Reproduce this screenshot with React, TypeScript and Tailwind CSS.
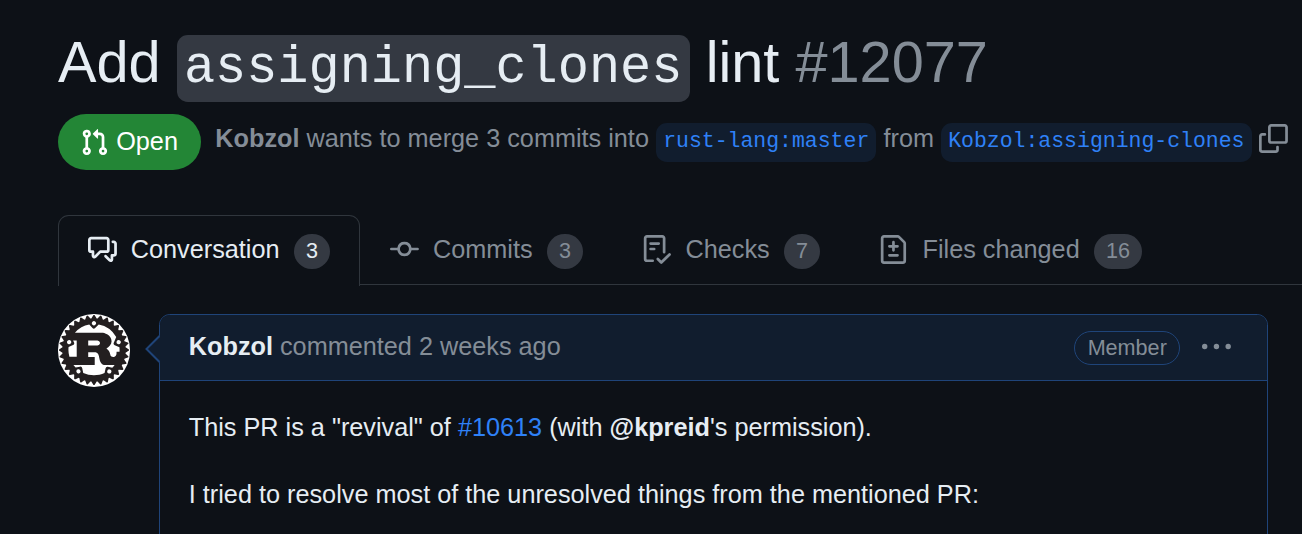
import type { ReactNode } from "react";
import { SiRust } from "react-icons/si";

const paths = {
  pullRequest:
    "M1.5 3.25a2.25 2.25 0 1 1 3 2.122v5.256a2.251 2.251 0 1 1-1.5 0V5.372A2.25 2.25 0 0 1 1.5 3.25Zm5.677-.177L9.573.677A.25.25 0 0 1 10 .854V2.5h1A2.5 2.5 0 0 1 13.5 5v5.628a2.251 2.251 0 1 1-1.5 0V5a1 1 0 0 0-1-1h-1v1.646a.25.25 0 0 1-.427.177L7.177 3.427a.25.25 0 0 1 0-.354ZM3.75 2.5a.75.75 0 1 0 0 1.5.75.75 0 0 0 0-1.5Zm0 9.5a.75.75 0 1 0 0 1.5.75.75 0 0 0 0-1.5Zm8.25.75a.75.75 0 1 0 1.5 0 .75.75 0 0 0-1.5 0Z",
  discussion:
    "M1.75 1h8.5c.966 0 1.75.784 1.75 1.75v5.5A1.75 1.75 0 0 1 10.25 10H7.061l-2.574 2.573A1.458 1.458 0 0 1 2 11.543V10h-.25A1.75 1.75 0 0 1 0 8.25v-5.5C0 1.784.784 1 1.75 1ZM1.5 2.75v5.5c0 .138.112.25.25.25h1a.75.75 0 0 1 .75.75v2.19l2.72-2.72a.749.749 0 0 1 .53-.22h3.5a.25.25 0 0 0 .25-.25v-5.5a.25.25 0 0 0-.25-.25h-8.5a.25.25 0 0 0-.25.25Zm13 2a.25.25 0 0 0-.25-.25h-.5a.75.75 0 0 1 0-1.5h.5c.966 0 1.75.784 1.75 1.75v5.5A1.75 1.75 0 0 1 14.25 12H14v1.543a1.458 1.458 0 0 1-2.487 1.03L9.22 12.28a.749.749 0 0 1 .326-1.275.749.749 0 0 1 .734.215l2.22 2.22v-2.19a.75.75 0 0 1 .75-.75h1a.25.25 0 0 0 .25-.25Z",
  commit:
    "M11.93 8.5a4.002 4.002 0 0 1-7.86 0H.75a.75.75 0 0 1 0-1.5h3.32a4.002 4.002 0 0 1 7.86 0h3.32a.75.75 0 0 1 0 1.5Zm-1.43-.75a2.5 2.5 0 1 0-5 0 2.5 2.5 0 0 0 5 0Z",
  checklist:
    "M2.5 1.75v11.5c0 .138.112.25.25.25h3.17a.75.75 0 0 1 0 1.5H2.75A1.75 1.75 0 0 1 1 13.25V1.75C1 .784 1.784 0 2.75 0h8.5C12.216 0 13 .784 13 1.75v7.736a.75.75 0 0 1-1.5 0V1.75a.25.25 0 0 0-.25-.25h-8.5a.25.25 0 0 0-.25.25Zm13.274 9.537v-.001l-4.557 4.45a.75.75 0 0 1-1.055-.008l-1.943-1.95a.75.75 0 0 1 1.062-1.058l1.419 1.425 4.026-3.932a.75.75 0 1 1 1.048 1.074ZM4.75 4h4.5a.75.75 0 0 1 0 1.5h-4.5a.75.75 0 0 1 0-1.5ZM4 7.75A.75.75 0 0 1 4.75 7h2a.75.75 0 0 1 0 1.5h-2A.75.75 0 0 1 4 7.75Z",
  fileDiff:
    "M1 1.75C1 .784 1.784 0 2.75 0h7.586c.464 0 .909.184 1.237.513l2.914 2.914c.329.328.513.773.513 1.237v9.586A1.75 1.75 0 0 1 13.25 16H2.75A1.75 1.75 0 0 1 1 14.25Zm1.75-.25a.25.25 0 0 0-.25.25v12.5c0 .138.112.25.25.25h10.5a.25.25 0 0 0 .25-.25V4.664a.25.25 0 0 0-.073-.177l-2.914-2.914a.25.25 0 0 0-.177-.073ZM8 3.25a.75.75 0 0 1 .75.75v1.5h1.5a.75.75 0 0 1 0 1.5h-1.5v1.5a.75.75 0 0 1-1.5 0V7h-1.5a.75.75 0 0 1 0-1.5h1.5V4A.75.75 0 0 1 8 3.25Zm-3 8a.75.75 0 0 1 .75-.75h4.5a.75.75 0 0 1 0 1.5h-4.5a.75.75 0 0 1-.75-.75Z",
  copy:
    "M0 6.75C0 5.784.784 5 1.75 5h1.5a.75.75 0 0 1 0 1.5h-1.5a.25.25 0 0 0-.25.25v7.5c0 .138.112.25.25.25h7.5a.25.25 0 0 0 .25-.25v-1.5a.75.75 0 0 1 1.5 0v1.5A1.75 1.75 0 0 1 9.25 16h-7.5A1.75 1.75 0 0 1 0 14.25ZM5 1.75C5 .784 5.784 0 6.75 0h7.5C15.216 0 16 .784 16 1.75v7.5A1.75 1.75 0 0 1 14.25 11h-7.5A1.75 1.75 0 0 1 5 9.25Zm1.75-.25a.25.25 0 0 0-.25.25v7.5c0 .138.112.25.25.25h7.5a.25.25 0 0 0 .25-.25v-7.5a.25.25 0 0 0-.25-.25Z",
  kebab:
    "M8 9a1.5 1.5 0 1 0 0-3 1.5 1.5 0 0 0 0 3ZM1.5 9a1.5 1.5 0 1 0 0-3 1.5 1.5 0 0 0 0 3Zm13 0a1.5 1.5 0 1 0 0-3 1.5 1.5 0 0 0 0 3Z",
};

type IconName = keyof typeof paths;

function Icon({ name, className = "" }: { name: IconName; className?: string }) {
  return (
    <svg viewBox="0 0 16 16" fill="currentColor" className={`size-[28.9px] shrink-0 ${className}`}>
      <path d={paths[name]} />
    </svg>
  );
}

function Branch({ children }: { children: ReactNode }) {
  return (
    <span className="h-[39px] rounded-[10.8px] bg-[#111d2e] px-[7.2px] font-['Liberation_Mono',monospace] text-[21.47px] leading-[37px] text-[#2f81f7]">
      {children}
    </span>
  );
}

function Tab({ icon, label, count, active = false }: { icon: IconName; label: string; count: number; active?: boolean }) {
  return (
    <a
      className={`flex h-[71px] shrink-0 items-start pt-[19px] pl-[28.7px] ${
        active
          ? "rounded-t-[10.8px] border border-b-0 border-[#30363d] bg-[#0d1117] pr-[29.3px] text-[#e6edf3]"
          : "border border-b-0 border-transparent pr-[28.7px] text-[#848d97]"
      }`}
    >
      <Icon name={icon} />
      <span className="ml-[14.2px] leading-[29px]">{label}</span>
      <span className="mt-[-1px] ml-[14.4px] flex h-[35px] min-w-[36px] items-start justify-center rounded-full bg-[#343942] px-[11.9px] text-[21.6px] leading-[34px]">
        {count}
      </span>
    </a>
  );
}

export default function App() {
  return (
    <main className="h-[534px] w-[1302px] overflow-hidden bg-[#0d1117] pt-[26px] pl-[58px] font-['Liberation_Sans',Arial,sans-serif] text-[25.25px] whitespace-nowrap text-[#e6edf3]">
      <h1 className="h-[88px] text-[57.7px] leading-[72px]">
        Add{" "}
        <code className="rounded-[10.8px] bg-[#343942] px-[7.2px] py-[3.6px] font-['Liberation_Mono',monospace] text-[51.93px]">
          assigning_clones
        </code>{" "}
        lint <span className="text-[#848d97]">#12077</span>
      </h1>

      <div className="flex h-[101px] items-start text-[#848d97]">
        <span className="flex h-14 shrink-0 items-center rounded-full bg-[#238636] pr-[23px] pl-[21.6px] text-white">
          <Icon name="pullRequest" className="mr-[7.7px]" />
          Open
        </span>
        <div className="ml-[14.4px] flex pt-[9px] leading-[32px]">
          <span className="mt-[-1px] whitespace-pre">
            <b>Kobzol</b> wants to merge 3 commits into{" "}
          </span>
          <Branch>rust-lang:master</Branch>
          <span className="mt-[-1px] whitespace-pre"> from </span>
          <Branch>Kobzol:assigning-clones</Branch>
          <Icon name="copy" className="mt-px ml-[7.2px]" />
        </div>
      </div>

      <nav className="flex h-[70px] border-b border-[#30363d]">
        <Tab icon="discussion" label="Conversation" count={3} active />
        <Tab icon="commit" label="Commits" count={3} />
        <Tab icon="checklist" label="Checks" count={7} />
        <Tab icon="fileDiff" label="Files changed" count={16} />
      </nav>

      <section className="mt-[29px] flex">
        <div className="ml-[-0.4px] flex size-[72.6px] shrink-0 items-center justify-center rounded-full bg-white">
          <SiRust className="size-[70px] text-[#231f20]" />
        </div>
        <article className="relative ml-[28.8px] h-[300px] w-[1109px] rounded-[10.8px] border border-[#1f4479]">
          <svg viewBox="0 0 15 30" className="absolute top-[19px] left-[-15px] h-[30px] w-[15px]">
            <path d="M15 1.5 1.5 15 15 28.5Z" fill="#111d2e" />
            <path d="M14.5 2 1.5 15 14.5 28" fill="none" stroke="#1f4479" strokeWidth="2" />
          </svg>
          <header className="flex h-[66px] items-start rounded-t-[9.8px] border-b border-[#1f4479] bg-[#111d2e] pt-4 pr-[36.3px] pl-[28.8px] text-[#848d97]">
            <span className="mt-[-1px] leading-[32px]">
              <b className="text-[#e6edf3]">Kobzol</b> commented 2 weeks ago
            </span>
            <span className="ml-auto flex h-[34px] items-center rounded-full border border-[#1f4479] px-[12.4px] text-[21.6px] leading-none">
              Member
            </span>
            <Icon name="kebab" className="mt-[2px] ml-[21.6px]" />
          </header>
          <div className="flex flex-col gap-[28.8px] pt-[28px] pl-[28.8px] leading-[37.8px]">
            <p>
              This PR is a "revival" of <a className="text-[#2f81f7]">#10613</a> (with <b>@kpreid</b>'s permission).
            </p>
            <p>I tried to resolve most of the unresolved things from the mentioned PR:</p>
          </div>
        </article>
      </section>
    </main>
  );
}
